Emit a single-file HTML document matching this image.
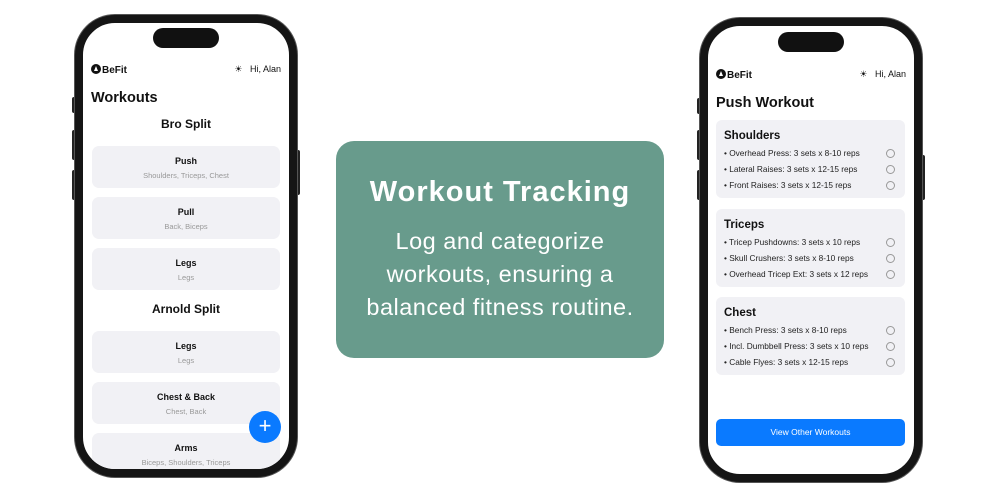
<!DOCTYPE html>
<html><head><style>
*{margin:0;padding:0;box-sizing:border-box}
body{width:1000px;height:500px;background:#fff;font-family:"Liberation Sans",sans-serif;position:relative;overflow:hidden;color:#111}
.a{position:absolute}
.phone{position:absolute;border:8px solid #151515;border-radius:40px;background:#fff;overflow:hidden;box-shadow:0 0 0 1px #555}
.btn{position:absolute;background:#222;width:4px;border-radius:2px}
.island{position:absolute;width:66px;height:20px;background:#111;border-radius:10px;left:50%;margin-left:-33px;top:5px}
.card{position:absolute;background:#f1f1f5;border-radius:7px;text-align:center}
.card b{display:block;font-size:9px;margin-top:10px}
.card span{display:block;font-size:7.5px;color:#999;margin-top:5px}
.sec{position:absolute;left:8px;width:189px;background:#f1f1f5;border-radius:6px;padding:10px 8px 8px}
.sec h4{font-size:11.5px;margin-bottom:3px}
.row{font-size:8.3px;height:16px;line-height:16px;position:relative;color:#222}
.row i{position:absolute;right:2px;top:4px;width:9px;height:9px;border:1px solid #999;border-radius:50%}
.hdr{position:absolute;top:42px;left:8px;right:8px;font-size:10px;font-weight:bold}
.hdr .r{position:absolute;right:0;top:0;font-weight:normal;font-size:9px}
.logo{display:inline-block;width:10px;height:10px;border-radius:50%;background:#111;vertical-align:-1px;margin-right:1px;position:relative}
.logo:after{content:"";position:absolute;left:2.5px;top:2px;border-left:2.5px solid transparent;border-right:2.5px solid transparent;border-bottom:5px solid #fff}
</style></head><body>
<div class="btn" style="left:72px;top:97px;height:16px"></div>
<div class="btn" style="left:72px;top:130px;height:30px"></div>
<div class="btn" style="left:72px;top:170px;height:30px"></div>
<div class="btn" style="left:296px;top:150px;height:45px"></div>
<div class="phone" style="left:75px;top:15px;width:222px;height:462px">
 <div class="island"></div>
 <div class="hdr" style="top:41px"><span class="logo"></span>BeFit<span class="r">☀&nbsp;&nbsp;&nbsp;Hi, Alan</span></div>
 <div class="a" style="left:8px;top:67px;font-size:14.5px;font-weight:bold">Workouts</div>
 <div class="a" style="left:0;width:206px;top:94px;text-align:center;font-size:12px;font-weight:bold">Bro Split</div>
 <div class="card" style="left:9px;top:123px;width:188px;height:42px"><b>Push</b><span>Shoulders, Triceps, Chest</span></div>
 <div class="card" style="left:9px;top:174px;width:188px;height:42px"><b>Pull</b><span>Back, Biceps</span></div>
 <div class="card" style="left:9px;top:225px;width:188px;height:42px"><b>Legs</b><span>Legs</span></div>
 <div class="a" style="left:0;width:206px;top:279px;text-align:center;font-size:12px;font-weight:bold">Arnold Split</div>
 <div class="card" style="left:9px;top:308px;width:188px;height:42px"><b>Legs</b><span>Legs</span></div>
 <div class="card" style="left:9px;top:359px;width:188px;height:42px"><b>Chest &amp; Back</b><span>Chest, Back</span></div>
 <div class="card" style="left:9px;top:410px;width:188px;height:42px"><b>Arms</b><span>Biceps, Shoulders, Triceps</span></div>
 <div class="a" style="left:166px;top:388px;width:32px;height:32px;border-radius:50%;background:#0a7aff;color:#fff;font-size:22px;line-height:30px;text-align:center">+</div>
</div>

<div class="a" style="left:336px;top:141px;width:328px;height:217px;background:#689b8c;border-radius:18px;color:#fff;text-align:center">
 <div style="font-size:29px;font-weight:bold;margin-top:35px;letter-spacing:1px">Workout Tracking</div>
 <div style="font-size:23.5px;line-height:33px;margin-top:16px;letter-spacing:0.5px">Log and categorize<br>workouts, ensuring a<br>balanced fitness routine.</div>
</div>

<div class="btn" style="left:697px;top:98px;height:16px"></div>
<div class="btn" style="left:697px;top:130px;height:30px"></div>
<div class="btn" style="left:697px;top:170px;height:30px"></div>
<div class="btn" style="left:921px;top:155px;height:45px"></div>
<div class="phone" style="left:700px;top:18px;width:222px;height:464px">
 <div class="island" style="top:6px"></div>
 <div class="hdr" style="top:43px"><span class="logo"></span>BeFit<span class="r">☀&nbsp;&nbsp;&nbsp;Hi, Alan</span></div>
 <div class="a" style="left:8px;top:69px;font-size:14.5px;font-weight:bold">Push Workout</div>
 <div class="sec" style="top:94px;height:78px"><h4>Shoulders</h4>
  <div class="row">• Overhead Press: 3 sets x 8-10 reps<i></i></div>
  <div class="row">• Lateral Raises: 3 sets x 12-15 reps<i></i></div>
  <div class="row">• Front Raises: 3 sets x 12-15 reps<i></i></div></div>
 <div class="sec" style="top:183px;height:78px"><h4>Triceps</h4>
  <div class="row">• Tricep Pushdowns: 3 sets x 10 reps<i></i></div>
  <div class="row">• Skull Crushers: 3 sets x 8-10 reps<i></i></div>
  <div class="row">• Overhead Tricep Ext: 3 sets x 12 reps<i></i></div></div>
 <div class="sec" style="top:271px;height:78px"><h4>Chest</h4>
  <div class="row">• Bench Press: 3 sets x 8-10 reps<i></i></div>
  <div class="row">• Incl. Dumbbell Press: 3 sets x 10 reps<i></i></div>
  <div class="row">• Cable Flyes: 3 sets x 12-15 reps<i></i></div></div>
 <div class="a" style="left:8px;top:393px;width:189px;height:27px;background:#0a7aff;border-radius:5px;color:#fff;font-size:8.5px;text-align:center;line-height:27px">View Other Workouts</div>
</div>
</body></html>
